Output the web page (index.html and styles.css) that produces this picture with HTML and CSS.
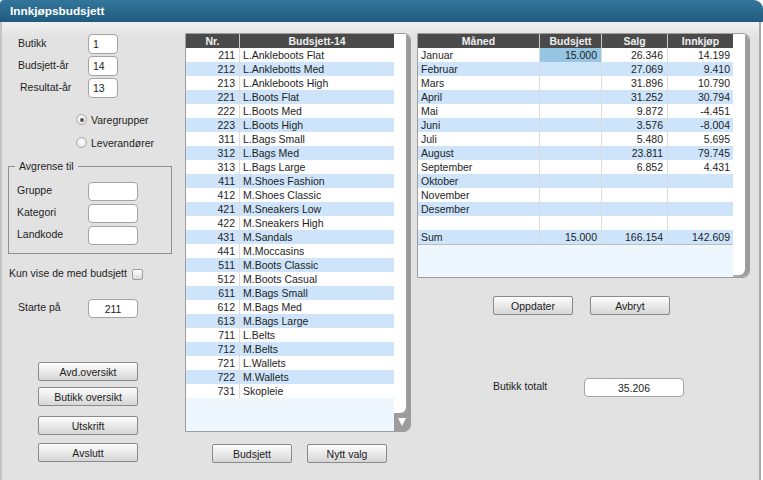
FILE: index.html
```html
<!DOCTYPE html>
<html lang="no">
<head>
    <meta charset="UTF-8">
    <title>Innkjøpsbudsjett</title>
    <link rel="stylesheet" href="styles.css">
</head>
<body>
<div class="window">
    <!-- Title bar -->
    <div class="titlebar">Innkjøpsbudsjett</div>

    <div class="main">
        <!-- Left: filters -->
        <div class="left">
            <div class="field">
                <label class="lbl">Butikk</label>
                <input class="inp inp-s" type="text" value="1">
            </div>
            <div class="field">
                <label class="lbl">Budsjett-år</label>
                <input class="inp inp-s" type="text" value="14">
            </div>
            <div class="field">
                <label class="lbl lbl-indent">Resultat-år</label>
                <input class="inp inp-s" type="text" value="13">
            </div>

            <div class="radios">
                <div class="radio-row"><span class="radio checked"></span>Varegrupper</div>
                <div class="radio-row"><span class="radio"></span>Leverandører</div>
            </div>

            <fieldset class="group">
                <legend>Avgrense til</legend>
                <div class="field field-g">
                    <label class="lbl">Gruppe</label>
                    <input class="inp inp-m" type="text">
                </div>
                <div class="field field-g">
                    <label class="lbl">Kategori</label>
                    <input class="inp inp-m" type="text">
                </div>
                <div class="field field-g">
                    <label class="lbl">Landkode</label>
                    <input class="inp inp-m" type="text">
                </div>
            </fieldset>

            <div class="check-row">Kun vise de med budsjett <span class="checkbox"></span></div>

            <div class="field field-start">
                <label class="lbl">Starte på</label>
                <input class="inp inp-m center" type="text" value="211">
            </div>

            <div class="btn-stack">
                <button class="btn">Avd.oversikt</button>
                <button class="btn mt-6">Butikk oversikt</button>
                <button class="btn mt-10">Utskrift</button>
                <button class="btn mt-8">Avslutt</button>
            </div>
        </div>

        <!-- Middle: budget groups -->
        <div class="middle">
            <div class="list-box list-groups">
                <div class="list">
                    <div class="thead cols-groups">
                        <div>Nr.</div>
                        <div>Budsjett-14</div>
                    </div>
                    <div class="rows">
                        <div class="row cols-groups"><div class="num">211</div><div class="txt">L.Ankleboots Flat</div></div>
                        <div class="row cols-groups"><div class="num">212</div><div class="txt">L.Anklebotts Med</div></div>
                        <div class="row cols-groups"><div class="num">213</div><div class="txt">L.Ankleboots High</div></div>
                        <div class="row cols-groups"><div class="num">221</div><div class="txt">L.Boots Flat</div></div>
                        <div class="row cols-groups"><div class="num">222</div><div class="txt">L.Boots Med</div></div>
                        <div class="row cols-groups"><div class="num">223</div><div class="txt">L.Boots High</div></div>
                        <div class="row cols-groups"><div class="num">311</div><div class="txt">L.Bags Small</div></div>
                        <div class="row cols-groups"><div class="num">312</div><div class="txt">L.Bags Med</div></div>
                        <div class="row cols-groups"><div class="num">313</div><div class="txt">L.Bags Large</div></div>
                        <div class="row cols-groups"><div class="num">411</div><div class="txt">M.Shoes Fashion</div></div>
                        <div class="row cols-groups"><div class="num">412</div><div class="txt">M.Shoes Classic</div></div>
                        <div class="row cols-groups"><div class="num">421</div><div class="txt">M.Sneakers Low</div></div>
                        <div class="row cols-groups"><div class="num">422</div><div class="txt">M.Sneakers High</div></div>
                        <div class="row cols-groups"><div class="num">431</div><div class="txt">M.Sandals</div></div>
                        <div class="row cols-groups"><div class="num">441</div><div class="txt">M.Moccasins</div></div>
                        <div class="row cols-groups"><div class="num">511</div><div class="txt">M.Boots Classic</div></div>
                        <div class="row cols-groups"><div class="num">512</div><div class="txt">M.Boots Casual</div></div>
                        <div class="row cols-groups"><div class="num">611</div><div class="txt">M.Bags Small</div></div>
                        <div class="row cols-groups"><div class="num">612</div><div class="txt">M.Bags Med</div></div>
                        <div class="row cols-groups"><div class="num">613</div><div class="txt">M.Bags Large</div></div>
                        <div class="row cols-groups"><div class="num">711</div><div class="txt">L.Belts</div></div>
                        <div class="row cols-groups"><div class="num">712</div><div class="txt">M.Belts</div></div>
                        <div class="row cols-groups"><div class="num">721</div><div class="txt">L.Wallets</div></div>
                        <div class="row cols-groups"><div class="num">722</div><div class="txt">M.Wallets</div></div>
                        <div class="row cols-groups"><div class="num">731</div><div class="txt">Skopleie</div></div>
                    </div>
                    <div class="fill"></div>
                </div>
                <div class="scroll">
                    <div class="scroll-track"></div>
                    <div class="scroll-arrow">
                        <svg width="10" height="10" viewBox="0 0 10 10"><polygon points="1,1 9,1 5,9" fill="#fff"/></svg>
                    </div>
                </div>
            </div>

            <div class="btn-row btn-row-mid">
                <button class="btn btn-w">Budsjett</button>
                <button class="btn btn-w">Nytt valg</button>
            </div>
        </div>

        <!-- Right: months -->
        <div class="right">
            <div class="list-box list-months">
                <div class="list">
                    <div class="thead cols-months">
                        <div>Måned</div>
                        <div>Budsjett</div>
                        <div>Salg</div>
                        <div>Innkjøp</div>
                    </div>
                    <div class="rows">
                        <div class="row cols-months"><div class="txt">Januar</div><div class="num hl">15.000</div><div class="num">26.346</div><div class="num">14.199</div></div>
                        <div class="row cols-months"><div class="txt">Februar</div><div class="num"></div><div class="num">27.069</div><div class="num">9.410</div></div>
                        <div class="row cols-months"><div class="txt">Mars</div><div class="num"></div><div class="num">31.896</div><div class="num">10.790</div></div>
                        <div class="row cols-months"><div class="txt">April</div><div class="num"></div><div class="num">31.252</div><div class="num">30.794</div></div>
                        <div class="row cols-months"><div class="txt">Mai</div><div class="num"></div><div class="num">9.872</div><div class="num">-4.451</div></div>
                        <div class="row cols-months"><div class="txt">Juni</div><div class="num"></div><div class="num">3.576</div><div class="num">-8.004</div></div>
                        <div class="row cols-months"><div class="txt">Juli</div><div class="num"></div><div class="num">5.480</div><div class="num">5.695</div></div>
                        <div class="row cols-months"><div class="txt">August</div><div class="num"></div><div class="num">23.811</div><div class="num">79.745</div></div>
                        <div class="row cols-months"><div class="txt">September</div><div class="num"></div><div class="num">6.852</div><div class="num">4.431</div></div>
                        <div class="row cols-months"><div class="txt">Oktober</div><div class="num"></div><div class="num"></div><div class="num"></div></div>
                        <div class="row cols-months"><div class="txt">November</div><div class="num"></div><div class="num"></div><div class="num"></div></div>
                        <div class="row cols-months"><div class="txt">Desember</div><div class="num"></div><div class="num"></div><div class="num"></div></div>
                        <div class="row cols-months"><div class="txt"></div><div class="num"></div><div class="num"></div><div class="num"></div></div>
                        <div class="row cols-months"><div class="txt">Sum</div><div class="num">15.000</div><div class="num">166.154</div><div class="num">142.609</div></div>
                    </div>
                    <div class="fill fill-line"></div>
                </div>
                <div class="scroll">
                    <div class="scroll-track"></div>
                </div>
            </div>

            <div class="btn-row btn-row-right">
                <button class="btn btn-w">Oppdater</button>
                <button class="btn btn-w">Avbryt</button>
            </div>

            <div class="total-row">
                <label class="lbl lbl-total">Butikk totalt</label>
                <input class="inp inp-l center" type="text" value="35.206">
            </div>
        </div>
    </div>
</div>
</body>
</html>
```

FILE: styles.css
```css
/* Reset */
* {
    margin: 0;
    padding: 0;
    box-sizing: border-box;
}

body {
    font-family: "Liberation Sans", Arial, sans-serif;
    font-size: 10.5px;
    color: #1e1e1e;
    background: #ffffff;
}

.window {
    width: 763px;
    height: 480px;
}

/* Title bar */
.titlebar {
    height: 22px;
    line-height: 22px;
    padding-left: 10px;
    background: linear-gradient(#34769b, #1f5b7e);
    border-radius: 4px 9px 0 0;
    color: #fff;
    font-size: 11.8px;
    font-weight: bold;
}

.main {
    display: flex;
    height: 458px;
    margin-right: 2px;
    border-left: 2px solid #c4c4c4;
    border-right: 2px solid #a8a8a8;
    background: linear-gradient(#f2f2f2, #e2e2e2 14px);
}

/* Left column */
.left {
    width: 183px;
    padding-top: 12px;
    display: flex;
    flex-direction: column;
}

.field {
    display: flex;
    align-items: center;
    height: 20px;
    margin-bottom: 2px;
    padding-left: 16px;
}

.lbl {
    width: 70px;
    padding-bottom: 3px;
}

.lbl-indent {
    padding-left: 2px;
}

.inp {
    height: 20px;
    border: 1px solid #a3a3a3;
    border-radius: 4px;
    background: #fff;
    font-family: "Liberation Sans", Arial, sans-serif;
    font-size: 10.5px;
    color: #222;
    padding: 0 4px;
    outline: none;
}

.inp-s {
    width: 30px;
}

.inp-m {
    width: 50px;
    height: 19px;
}

.inp-l {
    width: 100px;
    height: 19px;
}

.center {
    text-align: center;
}

/* Radio buttons */
.radios {
    margin: 9px 0 0 74px;
}

.radio-row {
    display: flex;
    align-items: center;
    gap: 4px;
    height: 23px;
    padding-bottom: 2px;
}

.radio {
    width: 11px;
    height: 11px;
    border: 1px solid #a9a9a9;
    border-radius: 50%;
    background: radial-gradient(circle at 50% 40%, #ffffff, #dcdcdc);
    display: flex;
    align-items: center;
    justify-content: center;
}

.radio.checked::after {
    content: "";
    width: 4px;
    height: 4px;
    border-radius: 50%;
    background: #555;
}

/* Filter group */
.group {
    width: 164px;
    margin: 5px 0 0 6px;
    padding: 9px 6px 8px 6px;
    border: 1px solid #8f8f8f;
}

.group legend {
    padding: 0 4px;
    line-height: 13px;
}

.field-g {
    height: 19px;
    margin-bottom: 3px;
    padding-left: 2px;
}

.field-g:last-child {
    margin-bottom: 0;
}

.field-g .lbl {
    width: 71px;
}

.check-row {
    display: flex;
    align-items: flex-end;
    height: 14px;
    margin-top: 12px;
    padding-left: 7px;
    line-height: 14px;
}

.checkbox {
    width: 11px;
    height: 11px;
    margin-left: 5px;
    border: 1px solid #9d9d9d;
    border-radius: 2px;
    background: linear-gradient(#ffffff, #d9d9d9);
}

.field-start {
    height: 19px;
    margin-top: 19px;
}

/* Buttons */
.btn {
    height: 19px;
    border: 1px solid #8a8a8a;
    border-radius: 2px;
    background: linear-gradient(#fdfdfd, #d6d6d6);
    font-family: "Liberation Sans", Arial, sans-serif;
    font-size: 10.5px;
    color: #222;
    cursor: pointer;
}

.btn-stack {
    display: flex;
    flex-direction: column;
    margin: 42px 0 0 36px;
}

.btn-stack .btn {
    width: 100px;
}

.mt-6 { margin-top: 6px; }
.mt-8 { margin-top: 8px; }
.mt-10 { margin-top: 10px; }

.btn-w {
    width: 80px;
}

.btn-row {
    display: flex;
}

.btn-row-mid {
    margin-top: 12px;
    padding-left: 27px;
    gap: 15px;
}

.btn-row-right {
    margin-top: 18px;
    padding-left: 76px;
    gap: 17px;
}

/* Middle + right columns */
.middle {
    width: 226px;
    padding-top: 11px;
}

.right {
    width: 333px;
    margin-left: 6px;
    padding-top: 11px;
}

.list-box {
    display: flex;
    border: 1px solid #9e9e9e;
    border-radius: 0 7px 7px 0;
    background: #fff;
    overflow: hidden;
}

.list-groups {
    height: 399px;
}

.list-months {
    height: 245px;
}

.list {
    display: flex;
    flex-direction: column;
}

.list-groups .list {
    width: 208px;
}

.list-months .list {
    width: 315px;
}

.cols-groups {
    display: grid;
    grid-template-columns: 54px 154px;
}

.cols-months {
    display: grid;
    grid-template-columns: 122px 62px 66px 65px;
}

.thead {
    height: 14px;
    line-height: 14px;
    background: #4a4a4a;
    color: #efefef;
    font-weight: bold;
    text-align: center;
}

.thead > div {
    border-right: 1px solid #c9c9c9;
}

.thead > div:last-child,
.row > div:last-child {
    border-right: none;
}

.row {
    height: 14px;
    line-height: 14px;
    white-space: nowrap;
}

.rows > .row:nth-child(even) {
    background: #cde4fa;
}

.row > div {
    border-right: 1px solid #dcdcdc;
}

.num {
    text-align: right;
    padding-right: 4px;
}

.cols-months .num:last-child {
    padding-right: 3px;
}

.txt {
    padding-left: 3px;
}

.hl {
    background: #96c6e4;
}

.fill {
    flex: 1;
    background: #eef6fe;
}

.fill-line {
    border-top: 1px solid #bdbdbd;
}

/* Scroll column */
.scroll {
    width: 16px;
    display: flex;
    flex-direction: column;
    background: linear-gradient(90deg, #b5b5b5, #999);
}

.scroll-track {
    flex: 1;
    margin-right: 4px;
    background: #fff;
    border-bottom-right-radius: 6px;
}

.list-months .scroll-track {
    margin-bottom: 2px;
}

.scroll-arrow {
    height: 18px;
    display: flex;
    align-items: center;
    justify-content: center;
    padding-right: 1px;
    background: #9c9c9c;
}

/* Shop total */
.total-row {
    display: flex;
    align-items: center;
    margin-top: 63px;
    padding-left: 76px;
}

.lbl-total {
    width: 91px;
    padding-bottom: 4px;
}
```
